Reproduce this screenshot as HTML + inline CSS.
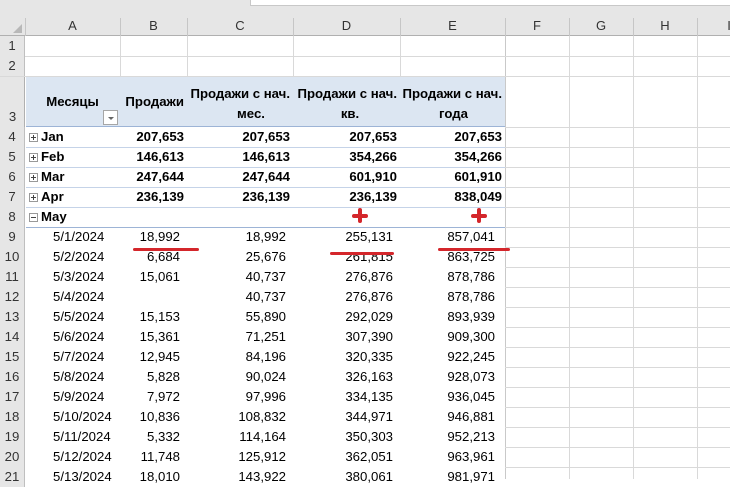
<!DOCTYPE html>
<html><head><meta charset="utf-8"><style>
*{margin:0;padding:0;box-sizing:border-box}
body{width:730px;height:479px;overflow:hidden;background:#fff;position:relative;font-family:"Liberation Sans",Arial,sans-serif;font-size:13.2px;color:#000}
.abs{position:absolute}
.hl{position:absolute;height:1px;background:#d9d9d9}
.vl{position:absolute;width:1px;background:#d9d9d9}
.r{position:absolute;height:20px;left:0;width:730px;line-height:20px;white-space:nowrap}
.r span{position:absolute;top:0}
.rh{left:0;width:25px;text-align:center;background:#e6e6e6;color:#333;border-right:1px solid #bfbfbf}
.a{left:25px;width:95px}
.b{left:120px;width:67px;text-align:right}
.c{left:187px;width:106px;text-align:right}
.d{left:293px;width:107px;text-align:right}
.e{left:400px;width:105px;text-align:right}
.bold span{font-weight:bold}
.bold span.rh{font-weight:normal}
.bold .b,.bold .c,.bold .d,.bold .e{padding-right:3px}
.dt .b,.dt .c,.dt .d,.dt .e{padding-right:7px}
.dt .e{padding-right:10px}
.dt .a{padding-left:28px}
.bold .a{padding-left:16px}
.pm{position:absolute;left:29px;top:6px;width:9px;height:9px;border:1px solid #999;background:#fff}
.pm:before{content:"";position:absolute;left:1px;top:3px;width:5px;height:1px;background:#444}
.pm.p:after{content:"";position:absolute;left:3px;top:1px;width:1px;height:5px;background:#444}
.red{position:absolute;background:#d4262b;border-radius:2px}
</style></head><body>
<div class="abs" style="left:0;top:0;width:730px;height:16px;background:#e6e6e6"></div>
<div class="abs" style="left:250px;top:0;width:480px;height:6px;background:#fff;border-bottom:1px solid #c8c8c8;border-left:1px solid #c8c8c8"></div>
<div class="abs" style="left:0;top:16px;width:730px;height:20px;background:#e6e6e6;border-bottom:1px solid #b0b0b0"></div>
<div class="abs" style="left:0;top:16px;width:25px;height:20px;"><div style="position:absolute;right:3px;bottom:3px;width:0;height:0;border-left:9px solid transparent;border-bottom:9px solid #b8b8b8"></div></div>
<div class="abs" style="top:16px;left:0;width:730px;height:20px;line-height:20px;color:#333;font-size:13px">
<span class="abs" style="left:25px;width:95px;text-align:center">A</span>
<span class="abs" style="left:120px;width:67px;text-align:center">B</span>
<span class="abs" style="left:187px;width:106px;text-align:center">C</span>
<span class="abs" style="left:293px;width:107px;text-align:center">D</span>
<span class="abs" style="left:400px;width:105px;text-align:center">E</span>
<span class="abs" style="left:505px;width:64px;text-align:center">F</span>
<span class="abs" style="left:569px;width:64px;text-align:center">G</span>
<span class="abs" style="left:633px;width:64px;text-align:center">H</span>
<span class="abs" style="left:697px;width:64px;text-align:center">I</span>
</div>
<div class="vl" style="left:25px;top:18px;height:18px;background:#c6c6c6"></div>
<div class="vl" style="left:120px;top:18px;height:18px;background:#c6c6c6"></div>
<div class="vl" style="left:187px;top:18px;height:18px;background:#c6c6c6"></div>
<div class="vl" style="left:293px;top:18px;height:18px;background:#c6c6c6"></div>
<div class="vl" style="left:400px;top:18px;height:18px;background:#c6c6c6"></div>
<div class="vl" style="left:505px;top:18px;height:18px;background:#c6c6c6"></div>
<div class="vl" style="left:569px;top:18px;height:18px;background:#c6c6c6"></div>
<div class="vl" style="left:633px;top:18px;height:18px;background:#c6c6c6"></div>
<div class="vl" style="left:697px;top:18px;height:18px;background:#c6c6c6"></div>
<div class="abs" style="left:0;top:36px;width:25px;height:443px;background:#e6e6e6;border-right:1px solid #b0b0b0"></div>
<div class="vl" style="left:569px;top:36px;height:443px"></div>
<div class="vl" style="left:633px;top:36px;height:443px"></div>
<div class="vl" style="left:697px;top:36px;height:443px"></div>
<div class="vl" style="left:505px;top:36px;height:443px;background:#c9c9c9"></div>
<div class="vl" style="left:120px;top:36px;height:40px"></div>
<div class="vl" style="left:187px;top:36px;height:40px"></div>
<div class="vl" style="left:293px;top:36px;height:40px"></div>
<div class="vl" style="left:400px;top:36px;height:40px"></div>
<div class="hl" style="left:0;top:56px;width:730px"></div>
<div class="hl" style="left:0;top:76px;width:730px"></div>
<div class="hl" style="left:505px;top:127px;width:225px"></div>
<div class="hl" style="left:505px;top:147px;width:225px"></div>
<div class="hl" style="left:505px;top:167px;width:225px"></div>
<div class="hl" style="left:505px;top:187px;width:225px"></div>
<div class="hl" style="left:505px;top:207px;width:225px"></div>
<div class="hl" style="left:505px;top:227px;width:225px"></div>
<div class="hl" style="left:505px;top:247px;width:225px"></div>
<div class="hl" style="left:505px;top:267px;width:225px"></div>
<div class="hl" style="left:505px;top:287px;width:225px"></div>
<div class="hl" style="left:505px;top:307px;width:225px"></div>
<div class="hl" style="left:505px;top:327px;width:225px"></div>
<div class="hl" style="left:505px;top:347px;width:225px"></div>
<div class="hl" style="left:505px;top:367px;width:225px"></div>
<div class="hl" style="left:505px;top:387px;width:225px"></div>
<div class="hl" style="left:505px;top:407px;width:225px"></div>
<div class="hl" style="left:505px;top:427px;width:225px"></div>
<div class="hl" style="left:505px;top:447px;width:225px"></div>
<div class="hl" style="left:505px;top:467px;width:225px"></div>
<div class="hl" style="left:0;top:127px;width:25px;background:#c6c6c6"></div>
<div class="hl" style="left:0;top:147px;width:25px;background:#c6c6c6"></div>
<div class="hl" style="left:0;top:167px;width:25px;background:#c6c6c6"></div>
<div class="hl" style="left:0;top:187px;width:25px;background:#c6c6c6"></div>
<div class="hl" style="left:0;top:207px;width:25px;background:#c6c6c6"></div>
<div class="hl" style="left:0;top:227px;width:25px;background:#c6c6c6"></div>
<div class="hl" style="left:0;top:247px;width:25px;background:#c6c6c6"></div>
<div class="hl" style="left:0;top:267px;width:25px;background:#c6c6c6"></div>
<div class="hl" style="left:0;top:287px;width:25px;background:#c6c6c6"></div>
<div class="hl" style="left:0;top:307px;width:25px;background:#c6c6c6"></div>
<div class="hl" style="left:0;top:327px;width:25px;background:#c6c6c6"></div>
<div class="hl" style="left:0;top:347px;width:25px;background:#c6c6c6"></div>
<div class="hl" style="left:0;top:367px;width:25px;background:#c6c6c6"></div>
<div class="hl" style="left:0;top:387px;width:25px;background:#c6c6c6"></div>
<div class="hl" style="left:0;top:407px;width:25px;background:#c6c6c6"></div>
<div class="hl" style="left:0;top:427px;width:25px;background:#c6c6c6"></div>
<div class="hl" style="left:0;top:447px;width:25px;background:#c6c6c6"></div>
<div class="hl" style="left:0;top:467px;width:25px;background:#c6c6c6"></div>
<div class="abs" style="left:26px;top:77px;width:479px;height:50px;background:#dce6f2;border-bottom:1px solid #9db4d6"></div>
<div class="abs" style="left:0;top:77px;width:25px;height:50px;line-height:20px;padding-top:30px;text-align:center;color:#333">3</div>
<div class="abs" style="left:25px;top:94px;width:95px;text-align:center;font-weight:bold">Месяцы</div>
<div class="abs" style="left:103px;top:110px;width:15px;height:15px;border:1px solid #a6a6a6;background:#fff"><div style="position:absolute;left:4px;top:6px;border-left:3px solid transparent;border-right:3px solid transparent;border-top:3px solid #666"></div></div>
<div class="abs" style="left:120px;top:94px;width:67px;text-align:right;padding-right:3px;font-weight:bold">Продажи</div>
<div class="abs" style="left:187px;top:84px;width:106px;text-align:right;padding-right:3px;font-weight:bold;line-height:20px;white-space:nowrap">Продажи с нач.<br><span style="display:block;text-align:center;padding-left:25px">мес.</span></div>
<div class="abs" style="left:293px;top:84px;width:107px;text-align:right;padding-right:3px;font-weight:bold;line-height:20px;white-space:nowrap">Продажи с нач.<br><span style="display:block;text-align:center;padding-left:10px">кв.</span></div>
<div class="abs" style="left:400px;top:84px;width:105px;text-align:right;padding-right:3px;font-weight:bold;line-height:20px;white-space:nowrap">Продажи с нач.<br><span style="display:block;text-align:center;padding-left:5px">года</span></div>
<div class="hl" style="left:26px;top:147px;width:479px;background:#c5d3e8"></div>
<div class="hl" style="left:26px;top:167px;width:479px;background:#c5d3e8"></div>
<div class="hl" style="left:26px;top:187px;width:479px;background:#c5d3e8"></div>
<div class="hl" style="left:26px;top:207px;width:479px;background:#c5d3e8"></div>
<div class="hl" style="left:26px;top:227px;width:479px;background:#9db4d6"></div>
<div class="r" style="top:36px"><span class="rh">1</span></div>
<div class="r" style="top:56px"><span class="rh">2</span></div>
<div class="r bold" style="top:127px"><span class="rh">4</span><i class="pm p"></i><span class="a">Jan</span><span class="b">207,653</span><span class="c">207,653</span><span class="d">207,653</span><span class="e">207,653</span></div>
<div class="r bold" style="top:147px"><span class="rh">5</span><i class="pm p"></i><span class="a">Feb</span><span class="b">146,613</span><span class="c">146,613</span><span class="d">354,266</span><span class="e">354,266</span></div>
<div class="r bold" style="top:167px"><span class="rh">6</span><i class="pm p"></i><span class="a">Mar</span><span class="b">247,644</span><span class="c">247,644</span><span class="d">601,910</span><span class="e">601,910</span></div>
<div class="r bold" style="top:187px"><span class="rh">7</span><i class="pm p"></i><span class="a">Apr</span><span class="b">236,139</span><span class="c">236,139</span><span class="d">236,139</span><span class="e">838,049</span></div>
<div class="r bold" style="top:207px"><span class="rh">8</span><i class="pm"></i><span class="a">May</span></div>
<div class="r dt" style="top:227px"><span class="rh">9</span><span class="a">5/1/2024</span><span class="b">18,992</span><span class="c">18,992</span><span class="d">255,131</span><span class="e">857,041</span></div>
<div class="r dt" style="top:247px"><span class="rh">10</span><span class="a">5/2/2024</span><span class="b">6,684</span><span class="c">25,676</span><span class="d">261,815</span><span class="e">863,725</span></div>
<div class="r dt" style="top:267px"><span class="rh">11</span><span class="a">5/3/2024</span><span class="b">15,061</span><span class="c">40,737</span><span class="d">276,876</span><span class="e">878,786</span></div>
<div class="r dt" style="top:287px"><span class="rh">12</span><span class="a">5/4/2024</span><span class="c">40,737</span><span class="d">276,876</span><span class="e">878,786</span></div>
<div class="r dt" style="top:307px"><span class="rh">13</span><span class="a">5/5/2024</span><span class="b">15,153</span><span class="c">55,890</span><span class="d">292,029</span><span class="e">893,939</span></div>
<div class="r dt" style="top:327px"><span class="rh">14</span><span class="a">5/6/2024</span><span class="b">15,361</span><span class="c">71,251</span><span class="d">307,390</span><span class="e">909,300</span></div>
<div class="r dt" style="top:347px"><span class="rh">15</span><span class="a">5/7/2024</span><span class="b">12,945</span><span class="c">84,196</span><span class="d">320,335</span><span class="e">922,245</span></div>
<div class="r dt" style="top:367px"><span class="rh">16</span><span class="a">5/8/2024</span><span class="b">5,828</span><span class="c">90,024</span><span class="d">326,163</span><span class="e">928,073</span></div>
<div class="r dt" style="top:387px"><span class="rh">17</span><span class="a">5/9/2024</span><span class="b">7,972</span><span class="c">97,996</span><span class="d">334,135</span><span class="e">936,045</span></div>
<div class="r dt" style="top:407px"><span class="rh">18</span><span class="a">5/10/2024</span><span class="b">10,836</span><span class="c">108,832</span><span class="d">344,971</span><span class="e">946,881</span></div>
<div class="r dt" style="top:427px"><span class="rh">19</span><span class="a">5/11/2024</span><span class="b">5,332</span><span class="c">114,164</span><span class="d">350,303</span><span class="e">952,213</span></div>
<div class="r dt" style="top:447px"><span class="rh">20</span><span class="a">5/12/2024</span><span class="b">11,748</span><span class="c">125,912</span><span class="d">362,051</span><span class="e">963,961</span></div>
<div class="r dt" style="top:467px"><span class="rh">21</span><span class="a">5/13/2024</span><span class="b">18,010</span><span class="c">143,922</span><span class="d">380,061</span><span class="e">981,971</span></div>
<div class="red" style="left:133px;top:248px;width:66px;height:3px"></div>
<div class="red" style="left:330px;top:252px;width:64px;height:3px"></div>
<div class="red" style="left:438px;top:248px;width:72px;height:3px"></div>
<div class="red" style="left:352px;top:214px;width:16px;height:4px"></div>
<div class="red" style="left:358px;top:208px;width:4px;height:15px"></div>
<div class="red" style="left:471px;top:214px;width:16px;height:4px"></div>
<div class="red" style="left:477px;top:208px;width:4px;height:15px"></div>
</body></html>
